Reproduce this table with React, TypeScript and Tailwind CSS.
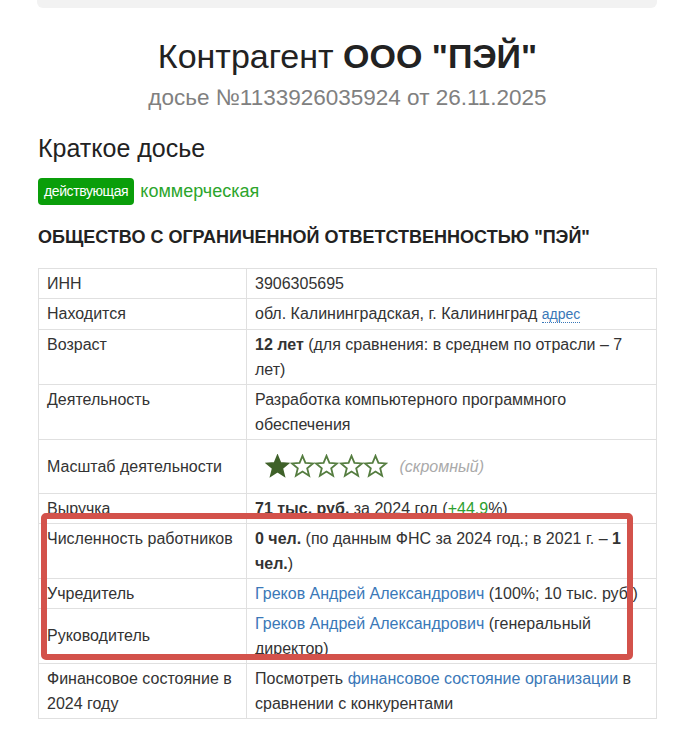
import React from "react";

const FONT = { fontFamily: '"Liberation Sans", Arial, sans-serif' };

function Star({ filled }: { filled: boolean }) {
  return (
    <svg width="25" height="24" viewBox="0 0 24 24" className="-mr-[0.5px]">
      <path
        d="M12 1.8l2.9 7.1 7.6.5-5.8 4.9 1.9 7.4L12 17.6l-6.6 4.1 1.9-7.4-5.8-4.9 7.6-.5z"
        fill={filled ? "#3f6129" : "#ffffff"}
        stroke={filled ? "#3f6129" : "#557d40"}
        strokeWidth="1.8"
        strokeLinejoin="miter"
      />
    </svg>
  );
}

const A = ({ children }: { children: React.ReactNode }) => (
  <a className="text-[#3a78b8]">{children}</a>
);

const ROWS: { label: React.ReactNode; value: React.ReactNode; mid?: boolean }[] = [
  { label: "ИНН", value: "3906305695" },
  {
    label: "Находится",
    value: (
      <>
        обл. Калининградская, г. Калининград{" "}
        <span className="text-[#3a78b8] text-[14px] border-b border-dotted border-[#3a78b8]">адрес</span>
      </>
    ),
  },
  {
    label: "Возраст",
    value: (
      <>
        <b>12 лет</b> (для сравнения: в среднем по отрасли – 7 лет)
      </>
    ),
  },
  { label: "Деятельность", value: "Разработка компьютерного программного обеспечения" },
  {
    label: "Масштаб деятельности",
    mid: true,
    value: (
      <div className="flex items-center pl-[10px] py-[12px]">
        <Star filled />
        <Star filled={false} />
        <Star filled={false} />
        <Star filled={false} />
        <Star filled={false} />
        <span className="ml-[12px] italic text-[#aaaaaa]">(скромный)</span>
      </div>
    ),
  },
  {
    label: "Выручка",
    value: (
      <>
        <b>71 тыс. руб.</b> за 2024 год (<span className="text-[#2e9e2e]">+44.9</span>%)
      </>
    ),
  },
  {
    label: "Численность работников",
    value: (
      <>
        <b>0 чел.</b> (по данным ФНС за 2024 год.; в 2021 г. – <b>1 чел.</b>)
      </>
    ),
  },
  {
    label: "Учредитель",
    value: (
      <span className="whitespace-nowrap">
        <A>Греков Андрей Александрович</A> (100%; 10 тыс. руб.)
      </span>
    ),
  },
  {
    label: "Руководитель",
    mid: true,
    value: (
      <>
        <A>Греков Андрей Александрович</A> (генеральный директор)
      </>
    ),
  },
  {
    label: "Финансовое состояние в 2024 году",
    value: (
      <>
        Посмотреть <A>финансовое состояние организации</A> в сравнении с конкурентами
      </>
    ),
  },
];

export default function App() {
  return (
    <div className="min-h-[740px] bg-white text-[#333333]" style={FONT}>
      <div className="relative ml-[38px] w-[619px] pb-[20px]">
        <div className="h-[8px] -ml-[1px] rounded-b-[6px] bg-[#f2f2f2]" />

        <h1 className="mt-[30px] text-center text-[34px] leading-[1.1] text-[#222222]">
          Контрагент <b>ООО "ПЭЙ"</b>
        </h1>
        <div className="mt-[9px] text-center text-[22.5px] leading-[1.2] text-[#808080]">
          досье №1133926035924 от 26.11.2025
        </div>

        <h2 className="mt-[22px] text-[25px] leading-[1.2] text-[#222222]">Краткое досье</h2>

        <div className="mt-[15px] flex items-center gap-[6px]">
          <span className="rounded-[4px] bg-[#0a9e0a] px-[6px] py-[4px] text-[14px] leading-[19px] tracking-[-0.4px] text-white">
            действующая
          </span>
          <span className="text-[18px] text-[#2ca52c]">коммерческая</span>
        </div>

        <h3 className="mt-[22px] text-[18px] font-bold leading-[1.2] text-[#222222]">
          ОБЩЕСТВО С ОГРАНИЧЕННОЙ ОТВЕТСТВЕННОСТЬЮ "ПЭЙ"
        </h3>

        <table className="mt-[19px] w-full border-collapse text-[16px] leading-[25px]">
          <tbody>
            {ROWS.map((r, i) => (
              <tr key={i}>
                <td
                  className={
                    "w-[208px] border border-[#e0e0e0] px-[8px] py-[2px] " +
                    (r.mid ? "align-middle" : "align-top")
                  }
                >
                  {r.label}
                </td>
                <td className="border border-[#e0e0e0] px-[8px] py-[2px] align-top">{r.value}</td>
              </tr>
            ))}
          </tbody>
        </table>

        <div className="pointer-events-none absolute left-[3px] top-[513px] h-[147px] w-[592px] rounded-[5px] border-[6px] border-[#d3524b]" />
      </div>
    </div>
  );
}
